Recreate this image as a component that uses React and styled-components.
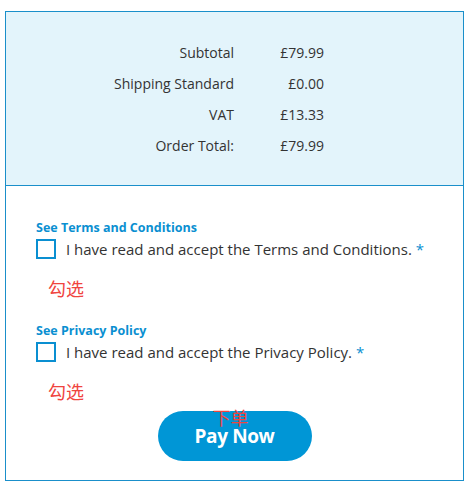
import React from "react";
import styled, { createGlobalStyle } from "styled-components";

const GlobalStyle = createGlobalStyle`
  html, body {
    margin: 0;
    padding: 0;
    background: #fff;
  }
  body {
    font-family: "Open Sans", "Liberation Sans", sans-serif;
    color: #333;
  }
`;

const totals = [
  { label: "Subtotal", value: "£79.99" },
  { label: "Shipping Standard", value: "£0.00" },
  { label: "VAT", value: "£13.33" },
  { label: "Order Total:", value: "£79.99" },
];

const agreements = [
  { link: "See Terms and Conditions", text: "I have read and accept the Terms and Conditions." },
  { link: "See Privacy Policy", text: "I have read and accept the Privacy Policy." },
];

const App = () => {
  return (
    <>
      <GlobalStyle />
      <Panel>
        <Summary>
          <TotalsGrid>
            {totals.map((row) => (
              <React.Fragment key={row.label}>
                <Label>{row.label}</Label>
                <Value>{row.value}</Value>
              </React.Fragment>
            ))}
          </TotalsGrid>
        </Summary>
        <Checkout>
          {agreements.map((item, i) => (
            <Agreement key={item.link} $first={i === 0}>
              <PolicyLink href="#">{item.link}</PolicyLink>
              <CheckRow>
                <Box type="checkbox" />
                <CheckText>
                  {item.text} <Required>*</Required>
                </CheckText>
              </CheckRow>
              <Note>勾选</Note>
            </Agreement>
          ))}
          <ButtonWrap>
            <PayButton type="button">Pay Now</PayButton>
            <ButtonNote>下单</ButtonNote>
          </ButtonWrap>
        </Checkout>
      </Panel>
    </>
  );
};

export default App;

const Panel = styled.div`
  box-sizing: border-box;
  width: 459px;
  margin: 11px 0 0 5px;
  border: 1px solid #1a8fca;
`;

const Summary = styled.div`
  background: #e3f4fb;
  border-bottom: 1px solid #1a8fca;
  padding: 25px 139px 24px 0;
  display: flex;
  justify-content: flex-end;
`;

const TotalsGrid = styled.div`
  display: grid;
  grid-template-columns: auto 90px;
  grid-auto-rows: 31px;
  align-items: center;
`;

const Label = styled.div`
  font-size: 14px;
  text-align: right;
  color: #333;
`;

const Value = styled.div`
  font-size: 14px;
  text-align: right;
  color: #333;
`;

const Checkout = styled.div`
  padding: 34px 30px 19px 30px;
  display: flex;
  flex-direction: column;
`;

const Agreement = styled.div`
  display: flex;
  flex-direction: column;
  margin-top: ${(p) => (p.$first ? "0" : "23px")};
`;

const PolicyLink = styled.a`
  font-family: "Open Sans", "Liberation Sans", sans-serif;
  font-weight: 700;
  font-size: 12.5px;
  line-height: 16px;
  color: #0a8fd1;
  text-decoration: none;
`;

const CheckRow = styled.label`
  display: flex;
  align-items: center;
  gap: 10px;
  margin-top: 3px;
  height: 20px;
`;

const Box = styled.input`
  appearance: none;
  box-sizing: border-box;
  width: 20px;
  height: 20px;
  margin: 0;
  border: 2px solid #0a8fd1;
  background: #fff;
  flex: none;
`;

const CheckText = styled.span`
  font-size: 15px;
  line-height: 20px;
  color: #333;
`;

const Required = styled.span`
  color: #0a8fd1;
`;

const Note = styled.div`
  margin-top: 17px;
  padding-left: 12px;
  font-family: "Noto Sans CJK SC", sans-serif;
  font-size: 18px;
  line-height: 24px;
  color: #f0443f;
`;

const ButtonWrap = styled.div`
  position: relative;
  align-self: center;
  margin-top: 8px;
`;

const PayButton = styled.button`
  display: block;
  width: 154px;
  height: 50px;
  border: none;
  border-radius: 25px;
  background: #0096d6;
  color: #fff;
  font-family: "Open Sans", "Liberation Sans", sans-serif;
  font-weight: 700;
  font-size: 19px;
  letter-spacing: -0.4px;
  padding: 0;
  cursor: pointer;
`;

const ButtonNote = styled.span`
  position: absolute;
  left: 55px;
  top: -5px;
  font-family: "Noto Sans CJK SC", sans-serif;
  font-size: 18px;
  line-height: 22px;
  color: #f0443f;
  pointer-events: none;
`;
